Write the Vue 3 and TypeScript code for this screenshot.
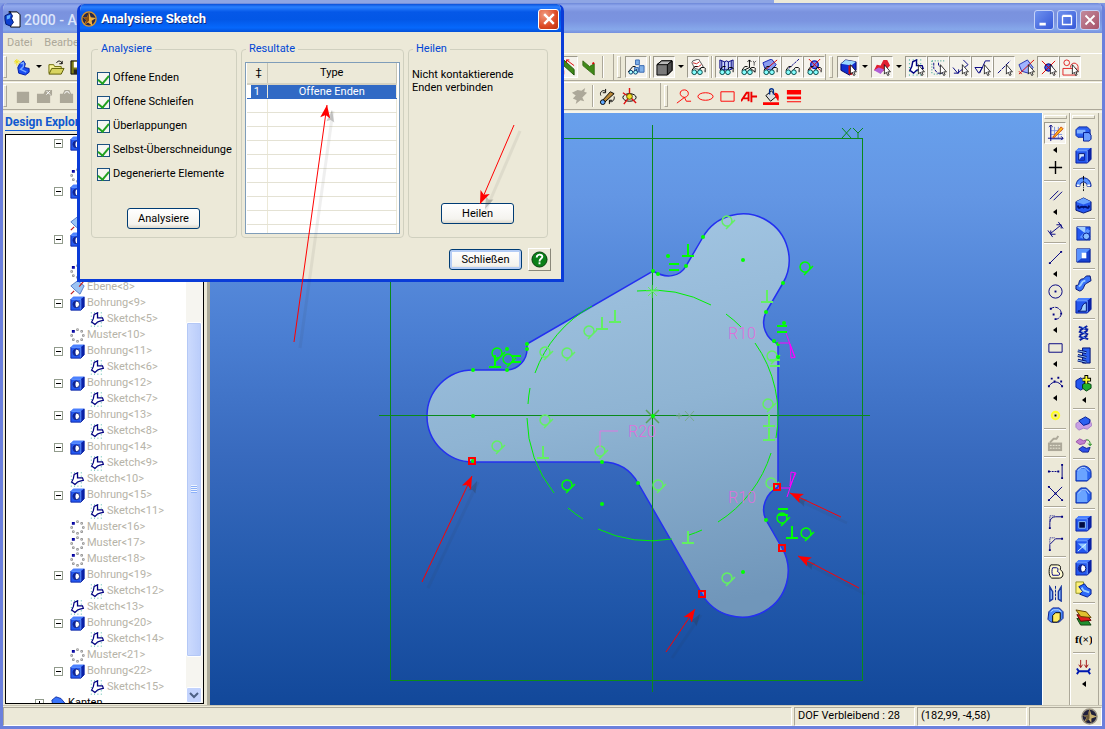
<script setup lang="ts">
import { ref } from 'vue'

type Item = { kind: 'btn' | 'drop' | 'sep' | 'gap'; icon?: string; label?: string; on?: boolean }
const b = (icon: string, label: string, on = false): Item => ({ kind: 'btn', icon, label, on })
const drop: Item = { kind: 'drop', label: 'Mehr' }
const sep: Item = { kind: 'sep' }
const gap: Item = { kind: 'gap' }

/* ---- icon parts, all on an 18 x 18 grid ---- */
const cursor = '<path d="M11 6v10l2-2 1.500 3.500 1.500-.8-1.400-3.100h2.800z" fill="#fff" stroke="#000" stroke-width=".8"/>'
const glasses =
  '<path d="M2 12l3-4h3M9 13l3-4h3l2 2" fill="none" stroke="#000"/><circle cx="4.500" cy="14" r="2.500" fill="#8ff" stroke="#044"/><circle cx="10.500" cy="14" r="2.500" fill="#8ff" stroke="#044"/><path d="M16 11v3" stroke="#000"/>'
const sketchShape =
  '<path d="M1 1h16M1 5h16M1 9h16M1 13h16M1 17h16" stroke="#0a9a88" stroke-dasharray="1 3" fill="none"/><path d="M6 15l-4-3 2-4 1-5 4-2 0 6 6 0 1 3-4 1-3 1z" fill="#fff" stroke="#000080" stroke-width="1.500"/>'
const block =
  '<path d="M1 4l3-3h13v12l-4 4H1z" fill="#2458f0"/><path d="M1 4l3-3h13l-4 3z" fill="#4a80ff"/><path d="M13 4l4-3v12l-4 4z" fill="#0a22a8"/><path d="M1 4h12v13" fill="none" stroke="#6fa0ff"/><path d="M1 4v13h12l4-4V1" fill="none" stroke="#0a1f9e"/>'
const ends = (x1: number, y1: number, x2: number, y2: number): string =>
  `<path d="M${x1 - 1} ${y1 - 1}h2v2h-2zM${x2 - 1} ${y2 - 1}h2v2h-2z" fill="#000080"/>`
const navy = 'fill="none" stroke="#000080"'

const icons: Record<string, string> = {
  app: '<path d="M5 1h9l3 3v13H7V1z" fill="#fff" stroke="#000"/><path d="M1 5l6-3 2 3-1 3 2 4-3 4-5-2-1-5z" fill="#0c3fd0" stroke="#001a70"/><path d="M3 5l4-1-1 4-3 1z" fill="#5fb0ff"/>',
  star: '<circle cx="9" cy="9" r="8" fill="#2a2a48" stroke="#d8962a" stroke-width="1.500"/><path d="M9 1l2 6 6 1-5 3 1 6-5-4-5 3 3-6-4-3 5 0z" fill="#f0b040"/><path d="M9 1v10l-5 5 2-6-4-3h5z" fill="#8a5010"/>',
  stardim: '<circle cx="9" cy="9" r="8" fill="#20203c" stroke="#9a9484" stroke-width="1.500"/><path d="M9 1l2 6 6 2-6 2 0 5-3-4-5 3 3-5-4-2 5 0z" fill="#c8b070"/><path d="M9 1v10l-5 5 2-6-4-2h5z" fill="#6a5838"/>',
  newdoc: '<path d="M6 5l4-3 2 3-1 4 5 1v4l-4 3-7-2-1-6z" fill="#1a4cf0" stroke="#001aa0"/><path d="M7 5l3-1 0 4-3 3 6 3" stroke="#79a8ff" stroke-width="1.500" fill="none"/><path d="M3 0v7M0 3h7M1 1l4 4M5 1l-4 4" stroke="#f0e020"/>',
  open: '<path d="M1 15V6h5l1 2h7v2" fill="#f8f49a" stroke="#6a6a00"/><path d="M1 16l3-6h13l-3 6z" fill="#d8d460" stroke="#5a5a00"/><path d="M9 4c2-3 5-2 6 1M15 2v3h-3" fill="none" stroke="#000"/>',
  save: '<path d="M1 2h15v14H1z" fill="#7a7a18" stroke="#000"/><path d="M4 3h9v6H4z" fill="#fff"/><path d="M4 11h9v5H4z" fill="#222"/>',
  g1: '<path d="M3 4h13v12H3z" fill="#aca899"/>',
  g2: '<path d="M1 6h7l2-4h7v6h-2v8H1z" fill="#aca899"/><path d="M11 3l4 4m0-4l-4 4" stroke="#fff"/>',
  g3: '<path d="M2 6h3l2-4h5l2 4h2v10H2z" fill="#aca899"/><path d="M7 6l1-2h3l1 2" fill="none" stroke="#fff"/>',
  greenbar: '<path d="M5 1l11 10v6L5 7z" fill="#3f8a18" stroke="#1a5008"/><path d="M0 10l5 6m0-4v4H1M8 1l8 6m-5-6H8v3" stroke="#d00" fill="none"/>',
  flag: '<path d="M2 2l7 6 5-3v12L2 7z" fill="#3f8a18" stroke="#3a6a18"/><path d="M12 5l2-1" stroke="#d00" stroke-width="2"/>',
  viewparts: '<path d="M8 1h4v5H8zM12 7h5v7h-5zM7 9h4v5H7z" fill="#7fb0e8" stroke="#3868b0"/><path d="M0 14l5-6h3M6 14l3-3" fill="none" stroke="#000"/><circle cx="3" cy="14" r="2" fill="#aff" stroke="#036"/><circle cx="8" cy="14" r="2" fill="#aff" stroke="#036"/>',
  cube: '<path d="M1 6l5-4h11v10l-5 5H1z" fill="#7a7a7a" stroke="#000"/><path d="M1 6l5-4h11l-5 4z" fill="#b8b8b8" stroke="#000"/><path d="M12 6l5-4v10l-5 5z" fill="#4a4a4a" stroke="#000"/>',
  barrel: '<path d="M3 2l6-2 5 8-5 3-4-1-3-6z" fill="#fff" stroke="#555"/><path d="M3 4l4 1 3-2M5 8l4 0 3-2" stroke="#c22" fill="none"/>' + glasses,
  vbook: '<path d="M2 1l5 2 2-1 2 1 5-2v9l-5 2-2-1-2 1-5-2zM7 3v9M11 3v9M4 2v9M14 2v9" fill="#c8d4f8" stroke="#000080"/>' + glasses,
  vaxis: '<path d="M10 9V1M8 3l2-2 2 2M10 9l6 5M10 9l-6 3" stroke="#000" fill="none"/><path d="M14 2l1 2 2-2m-2 2v3" stroke="#555" fill="none"/>' + glasses,
  vplane: '<path d="M1 4l9-4 5 6-5 6-7-2z" fill="#8a9cf0" stroke="#1420b0"/><path d="M4 11L16 1" stroke="#d00"/>' + glasses,
  vline: '<path d="M5 10L16 0" stroke="#000080" stroke-dasharray="3 1"/>' + glasses,
  vpoint: '<circle cx="9" cy="6" r="4" fill="#7080f0" stroke="#0018c0" stroke-width="1.500"/><path d="M3 0l12 12M15 0L3 12" stroke="#d00"/>' + glasses,
  selface: '<path d="M1 5l5-4 11 2v9l-7 5-9-5z" fill="#1030d0" stroke="#000060"/><path d="M1 5l5-4 11 2-5 4z" fill="#9ad8ff"/><path d="M9 7l4 0v10l-4-1z" fill="#e01010"/>' + cursor,
  selred: '<path d="M0 12l3-6 4 1 3-6 4 0 3 6-4 4-6 3z" fill="#e02030"/><path d="M0 12l5-3 6 2-4 5z" fill="#b060d8"/>' + cursor,
  selsk: sketchShape + cursor,
  selsk2: '<path d="M2 2h13M2 2v13M4 16h8" stroke="#0a8a7a" stroke-dasharray="1 2"/><path d="M4 4v6l4 5h5V9L9 7V3" fill="none" stroke="#000080" stroke-dasharray="3 1"/>' + cursor,
  seldim: `<path d="M12 1l5 5L6 15l-5-6M2 15h5v-4" ${navy}/>` + cursor,
  selsurf: `<path d="M1 9h8l-4 6zM6 15l6-13h5" ${navy}/>` + cursor,
  selline: `<path d="M2 15L15 2" ${navy} stroke-dasharray="5 1"/>` + cursor,
  selplane: '<path d="M1 6l9-5 6 8-5 6-7-2z" fill="#a0b4ff" stroke="#2030b0"/><path d="M1 16L17 1M1 13l3 3" stroke="#d00"/>' + cursor,
  selpoint: '<circle cx="9" cy="9" r="4" fill="#3858e0" stroke="#000080"/><path d="M2 2l14 14M16 2L2 16" stroke="#d00"/>' + cursor,
  selshape: '<circle cx="5" cy="4" r="3" fill="none" stroke="#e02020"/><path d="M1 10h14v7H1zM9 9c0-6 7-6 8-1v5" fill="none" stroke="#e02020"/>' + cursor,
  gplane: '<path d="M1 5l6-3 4 1 4-3-1 4 3 1-5 5 2 4-4-1-5 4 1-4-4-2 3-3z" fill="#aca899"/>',
  rotate: '<path d="M2 15L12 4l4 2-11 10z" fill="#b88838" stroke="#000"/><circle cx="4" cy="15" r="2.500" fill="#60a8ff" stroke="#000"/><path d="M2 8c-2-4 3-7 5-4M16 9c1 3-2 7-5 5M7 1v4H4M11 17v-4h3" fill="none" stroke="#000"/>',
  orient: '<ellipse cx="9" cy="10" rx="7" ry="4" fill="none" stroke="#000"/><path d="M9 0v9l-6 8M9 9l7 7M2 5l6 4" stroke="#e01010" stroke-width="1.500" fill="none"/><circle cx="9" cy="9" r="3" fill="#f0e020" stroke="#554400"/>',
  rlasso: '<path d="M2 16l8-6c6-1 5-8 0-8-6 0-6 7 0 8l2 4h5" fill="none" stroke="red"/>',
  rellipse: '<ellipse cx="9" cy="9" rx="8" ry="4" fill="none" stroke="red"/>',
  rrect: '<path d="M2 4h14v10H2z" fill="none" stroke="red"/>',
  rtext: '<path d="M0 14L6 5h2v9M3 11h5M11 4v11M11 9h6" fill="none" stroke="#e00" stroke-width="2"/>',
  bucket: '<path d="M3 8l6-5 5 6-6 5z" fill="#ddd" stroke="#000"/><path d="M7 7V3c0-3 4-3 4 0v4" fill="none" stroke="#003090" stroke-width="1.500"/><path d="M12 5c6-1 5 7 4 9l-3-5z" fill="red"/><path d="M0 15h17v3H0z" fill="red"/>',
  rlines: '<path d="M2 2h15v5H2zM2 9h15v3H2zM2 14h15v1H2z" fill="red"/>',
  /* sketch column */
  sketch: '<path d="M4 2v13h13M4 6h12M4 10h12M8 2v12M12 2v12" stroke="#7a90e0" fill="none"/><path d="M4 0v17M1 14h16M2 2l2-2 2 2M15 12l2 2-2 2" stroke="#000080" fill="none"/><path d="M6 13L15 2l2 2-9 9z" fill="#ffc020" stroke="#d04000"/>',
  plus: '<path d="M9 2v14M2 9h14" stroke="#000" stroke-width="1.500"/>',
  parallel: `<path d="M3 13L12 4M7 14l9-9" ${navy}/>`,
  dimension: `<path d="M1 10l5 7M12 1l5 7M4 13L14 5M4 10v4h5M10 4h5v4" ${navy}/>`,
  line: `<path d="M3 15L15 3" ${navy}/>` + ends(3, 15, 15, 3),
  circle: `<circle cx="9" cy="9" r="7" ${navy}/><path d="M8 8h2v2H8z" fill="#000080"/>`,
  arc: `<path d="M4 4c5-4 12 0 11 6-1 4-4 5-6 5" ${navy} stroke-dasharray="4 1"/>` + ends(4, 4, 9, 15) + ends(7, 10, 15, 9),
  rect: `<path d="M2 5h14v9H2z" ${navy}/>`,
  spline: `<path d="M2 14c4-6 10-6 14 0" ${navy}/>` + ends(2, 14, 16, 14) + ends(5, 6, 12, 5) + ends(8, 9, 15, 9),
  point: '<circle cx="9" cy="9" r="4" fill="#f4e890" stroke="#ffff20" stroke-width="2"/><path d="M8 8h2v2H8z" fill="#000"/>',
  keyboard: '<path d="M1 8h15v9H1z" fill="#aca899"/><path d="M3 8l4-4h3l2-3" stroke="#aca899" fill="none" stroke-width="2"/><path d="M3 11h11M3 14h11" stroke="#ece9d8" stroke-dasharray="2 1"/>',
  extend: `<path d="M2 9h10" ${navy} stroke-dasharray="2 1"/><path d="M16 2v14" ${navy}/>` + ends(2, 9, 16, 2) + ends(12, 9, 16, 16),
  trim: `<path d="M2 2l14 14M2 16L16 2" ${navy}/>` + ends(2, 2, 16, 16) + ends(2, 16, 9, 9),
  fillet: `<path d="M3 16V10c0-4 3-6 6-6h7" ${navy}/><path d="M3 9V3h6" ${navy} stroke-dasharray="1 1"/>` + ends(3, 16, 16, 4),
  chamfer: `<path d="M3 16V10l6-6h7" ${navy}/><path d="M3 9V3h6" ${navy} stroke-dasharray="1 1"/>` + ends(3, 16, 16, 4),
  offset: '<path d="M4 2h7c3 0 4 2 3 5 4 2 4 9-1 9H5c-4-2-3-12-1-14z" fill="#fffbd0" stroke="#000"/><path d="M6 5h4c2 0 2 2 1 4 3 1 3 4 1 4H6c-1-2-1-6 0-8z" fill="none" stroke="#000080"/>',
  mirror: '<path d="M3 2l3 5v8l-3 2zM15 2l-3 5v8l3 2z" fill="#8fc0ff" stroke="#1838a0" stroke-width="1.500"/><path d="M9 1v16" stroke="#002090" stroke-dasharray="3 1"/>',
  project: '<path d="M2 5l4-4h7l4 4v7l-4 4H4l-3-3z" fill="#4a88f8" stroke="#001890"/><path d="M4 5l3-2h5l3 2" stroke="#bfe0ff" fill="none"/><path d="M6 9l3-3h5v7l-3 3H6z" fill="#ffec60" stroke="#000"/>',
  /* solid column */
  extrude: '<path d="M1 5l3-3h9l3 3v5l-3 3H3l-2-2z" fill="#2c60f0" stroke="#0a28a0"/><path d="M2 5h9v4H2z" fill="#7fb0ff"/><path d="M9 8h6l2 3v4l-2 2H9z" fill="#6a9cff" stroke="#001890"/>',
  cut: block + '<path d="M4 7h6v7H4z" fill="#cfe4ff" stroke="#001070"/><path d="M4 14l3-4h3v4z" fill="#1238d8"/>',
  revolve: '<path d="M1 12c0-12 16-12 16 0h-4c0-6-8-6-8 0z" fill="#5a94ff" stroke="#001890"/><path d="M9 1v16" stroke="#000" stroke-dasharray="4 1 1 1"/><path d="M2 11h3M13 11h3" stroke="#fff" stroke-width="2"/>',
  revcut: '<path d="M1 5l8-4 8 4v9l-8 3-8-3z" fill="#2458f0" stroke="#001070"/><path d="M1 5l8 3 8-3-8-4z" fill="#6aa4ff"/><path d="M3 9c1 6 3-1 6 2 3-3 5 4 6-2" fill="none" stroke="#001070" stroke-width="2"/>',
  loft: '<path d="M2 2h14v14H2z" fill="#2458f0" stroke="#0a28a0"/><path d="M2 2h9v7z" fill="#a4d0ff"/><path d="M5 13l8-9 3 2-6 9z" fill="#5a94ff"/><circle cx="12" cy="12" r="3.500" fill="#88bcff" stroke="#001890"/>',
  loftcut: '<path d="M2 2h14v14H2z" fill="#1842d0" stroke="#001890"/><path d="M2 2l5 5v5l-5 4zM2 2h14l-5 5H7z" fill="#5a94ff"/><path d="M7 6h5v6H7z" fill="#fff"/>',
  sweep: '<path d="M1 11c5 1 1-7 8-7l3-3h4l1 5-5 3c-3 1-2 7-7 8l-4-2z" fill="#3a74fa" stroke="#001070"/><path d="M4 12c4-1 1-5 7-6" stroke="#9fd0ff" fill="none" stroke-width="2"/>',
  sweepcut: block + '<path d="M3 15c6 0 2-7 9-9v9z" fill="#9fd0ff" stroke="#001070"/>',
  helix: '<path d="M4 2l10 3M4 7l10 3M4 12l10 3M13 1L5 6M13 6l-8 5M13 11l-8 5" stroke="#0a1fa0" stroke-width="2"/><path d="M7 2l4 2M7 7l4 2M7 12l4 2" stroke="#6fa8ff"/>',
  helixcut: '<path d="M8 1h8v16H8z" fill="#2c60f0" stroke="#001070"/><path d="M3 4l9 2M3 9l9 2M3 14l9 2" stroke="#001070" stroke-width="3"/><path d="M3 4l9 2M3 9l9 2M3 14l9 2" stroke="#8fc4ff"/>',
  addpart: '<path d="M1 6l5-3 5 3v7l-5 3-5-3z" fill="#2458f0" stroke="#001890"/><path d="M8 10l4-2 5 2v4l-5 3-4-3z" fill="#20b030" stroke="#004010"/><path d="M12 0v9M8 5h9" stroke="#000" stroke-width="4"/><path d="M12 1v8M8 5h8" stroke="#ff3" stroke-width="2"/>',
  boolean: '<path d="M1 9l5-3 4 2 6-2 2 5-5 4-4-1-5 2-3-3z" fill="#c8a0e4" stroke="#a880c8"/><path d="M4 6l7-4 5 3-1 4-6 2z" fill="#2c60f0" stroke="#001890"/>',
  transform: '<path d="M1 5l4-3 4 2 3-1-2 4-5 1z" fill="#c080d0" stroke="#9850a8"/><path d="M4 13l4-3 4 2 4-1-2 5-6 0z" fill="#2c50e8" stroke="#102090"/><path d="M12 3c4 0 4 3 4 6m-2-2l2 2 2-2" fill="none" stroke="#008000"/>',
  filletsolid: '<path d="M1 6c3-4 6-5 9-5 5 1 7 4 7 7v5l-4 4H1z" fill="#2a64ee" stroke="#0a28a0"/><path d="M2 8c1-4 4-4 9-4l2 4v8H2z" fill="#6aa4ff"/><path d="M3 6c2-3 5-4 8-3l4 4" fill="none" stroke="#d0e8ff"/>',
  chamfersolid: '<path d="M1 6l5-5h6l5 5v7l-4 4H1z" fill="#2a64ee" stroke="#0a28a0"/><path d="M2 8l4-4h5l2 4v8H2z" fill="#6aa4ff"/><path d="M3 7l4-4h5l3 4" fill="none" stroke="#d0e8ff"/>',
  shell: block + '<path d="M4 7h7v7H4z" fill="#000a40" stroke="#8fc4ff"/>',
  draft: block + '<path d="M3 7l9 8V7z" fill="#8fc4ff"/><path d="M3 15l9-8" stroke="#dff"/>',
  hole: block + '<circle cx="7.500" cy="10" r="4" fill="#fff" stroke="#00106a"/><path d="M8 6C2 6 2 14 8 14 6 12 6 8 8 6z" fill="#0a2098"/>',
  import: '<path d="M1 1h8v12H1z" fill="#fff27a" stroke="#909020"/><path d="M4 6l6-3 3 4 4 2v5l-4 3-8-3 3-3z" fill="#2c68f8" stroke="#001890"/><path d="M7 7l2 3 6 2" stroke="#9fd0ff" fill="none" stroke-width="2"/>',
  layers: '<path d="M2 10l11 1 4 6-11 0z" fill="#209030" stroke="#104010"/><path d="M2 6l11 1 4 5-11 1z" fill="#e02020" stroke="#600"/><path d="M1 1l11 2 5 6-11-1z" fill="#e0c030" stroke="#604000"/>',
  fx: '<text x="0" y="13" font-family="Liberation Serif, serif" font-weight="bold" font-size="12" fill="#000">f(×)</text>',
  press: '<path d="M6 1v8M12 1v8M4 6l2 3 2-3M10 6l2 3 2-3" stroke="#a01010" fill="none"/><path d="M2 10l2 3-2 3M16 10l-2 3 2 3M3 13h12" stroke="#0018b0" stroke-width="2" fill="none"/>',
  /* tree */
  plane: '<path d="M1 7l8-6 8 6-5 10-6-5z" fill="#9cc4f4" stroke="#4870c0"/><path d="M1 17l4-4M11 8l5-6" stroke="#c02020" stroke-width="1.500"/>',
  pattern: '<path d="M8 1h2v2H8zM13 3h2v2h-2zM15 8h2v2h-2zM13 13h2v2h-2zM8 15h2v2H8zM3 13h2v2H3zM1 8h2v2H1z" fill="#fff" stroke="#888"/><path d="M3 3h2v2H3z" fill="#fff" stroke="#0000a0" stroke-width="1.500"/>',
  sk: sketchShape,
  edges: '<path d="M1 5l5-4 6 2 5 6v7H3z" fill="#3a74fa" stroke="#0a28a0"/><path d="M8 9h8v7H8z" fill="#2458f0" stroke="#e01010"/>',
}

const bar1Left: Item[] = [b('newdoc', 'Neu'), drop, b('open', 'Öffnen'), b('save', 'Speichern'), gap, b('greenbar', 'Messen', true), b('flag', 'Fläche'), sep]
const bar1Mid: Item[] = [b('viewparts', 'Teile', true), sep, b('cube', 'Schattiert', true), drop, b('barrel', 'Zylinder', true), sep, b('vbook', 'Schnitt', true), b('vaxis', 'Achsen', true), b('vplane', 'Ebenen', true), b('vline', 'Linien', true), b('vpoint', 'Punkte', true)]
const bar1Right: Item[] = [b('selface', 'Flächen wählen', true), drop, b('selred', 'Körper wählen', true), drop, b('selsk', 'Skizze wählen', true), b('selsk2', 'Kontur wählen', true), b('seldim', 'Maß wählen', true), b('selsurf', 'Symbol wählen', true), b('selline', 'Linie wählen', true), b('selplane', 'Ebene wählen'), b('selpoint', 'Punkt wählen', true), b('selshape', 'Form wählen', true)]
const bar2Left: Item[] = [b('g1', 'Fenster'), b('g2', 'Einfügen'), b('g3', 'Sperren'), gap, b('gplane', 'Ebene'), sep, b('rotate', 'Drehen'), b('orient', 'Ausrichten')]
const bar2Right: Item[] = [b('rlasso', 'Hinweis'), b('rellipse', 'Ellipse'), b('rrect', 'Rechteck'), b('rtext', 'Text'), b('bucket', 'Füllen'), b('rlines', 'Linienstärke')]
const colSketch: Item[] = [b('sketch', 'Skizze', true), drop, b('plus', 'Achse'), sep, b('parallel', 'Parallel'), drop, b('dimension', 'Bemaßung'), sep, b('line', 'Linie'), drop, b('circle', 'Kreis'), b('arc', 'Bogen'), drop, b('rect', 'Rechteck'), drop, b('spline', 'Spline'), drop, b('point', 'Punkt'), sep, b('keyboard', 'Eingabe'), sep, b('extend', 'Verlängern'), b('trim', 'Trimmen'), sep, b('fillet', 'Rundung'), b('chamfer', 'Fase'), sep, b('offset', 'Versatz'), b('mirror', 'Spiegeln'), b('project', 'Projizieren')]
const colSolid: Item[] = [b('extrude', 'Extrusion'), b('cut', 'Ausschnitt'), sep, b('revolve', 'Rotation'), b('revcut', 'Rotationsschnitt'), sep, b('loft', 'Loft'), b('loftcut', 'Loftschnitt'), sep, b('sweep', 'Sweep'), b('sweepcut', 'Sweepschnitt'), sep, b('helix', 'Helix'), b('helixcut', 'Helixschnitt'), sep, b('addpart', 'Teil'), drop, sep, b('boolean', 'Boolesch'), b('transform', 'Transformieren'), sep, b('filletsolid', 'Kante runden'), b('chamfersolid', 'Kante fasen'), sep, b('shell', 'Schale'), b('draft', 'Schräge'), b('hole', 'Bohrung'), b('import', 'Import'), sep, b('layers', 'Ebenen'), b('fx', 'Formel'), sep, b('press', 'Pressen'), drop]
const toolRows = [[bar1Left, bar1Mid, bar1Right], [bar2Left, bar2Right]]

type Row = { icon: string; label: string; lvl: number; box?: string }
const hole = (n: number | string): Row => ({ icon: 'hole', label: n ? `Bohrung<${n}>` : '', lvl: 1, box: '−' })
const sub = (n: number): Row => ({ icon: 'sk', label: `Sketch<${n}>`, lvl: 2 })
const pat = (n: number | string): Row => ({ icon: 'pattern', label: n ? `Muster<${n}>` : '', lvl: 1 })
const none: Row = { icon: 'sk', label: '', lvl: 2 }
const tree: Row[] = [
  hole(''), none, pat(''), hole(''), none, { icon: 'plane', label: '', lvl: 1 }, hole(''), none, pat(''),
  { icon: 'plane', label: 'Ebene<8>', lvl: 1 }, hole(9), sub(5), pat(10), hole(11), sub(6), hole(12), sub(7), hole(13), sub(8), hole(14), sub(9),
  { icon: 'sk', label: 'Sketch<10>', lvl: 1 }, hole(15), sub(11), pat(16), pat(17), pat(18), hole(19), sub(12),
  { icon: 'sk', label: 'Sketch<13>', lvl: 1 }, hole(20), sub(14), pat(21), hole(22), sub(15), { icon: 'edges', label: 'Kanten', lvl: 0, box: '+' },
]

const checks = ref([
  { label: 'Offene Enden', on: true },
  { label: 'Offene Schleifen', on: true },
  { label: 'Überlappungen', on: true },
  { label: 'Selbst-Überschneidungen', on: true },
  { label: 'Degenerierte Elemente', on: true },
])
const emptyRows = 10
const dialogOpen = ref(true)

/* ---- sketch geometry ---- */
const outline =
  'M473 370A46 46 0 0 0 473 462H602Q626 462 638 483L702 594A46 46 0 1 0 782 548L766 520C760 508 766 493 778 487V344C766 339 760 325 766 312L783 283A46 46 0 1 0 703 237L686 266C680 277 666 279 653 271L527 344V349A21 21 0 0 1 507 370Z'
const dashes = [
  [637, 291, 711, 305], [726, 314, 741, 327], [755, 343, 776, 438], [771, 453, 718, 522], [702, 530, 689, 535],
  [672, 539, 598, 529], [583, 519, 568, 508], [554, 493, 527, 418], [528, 404, 530, 388], [535, 373, 592, 306],
].map(([x1, y1, x2, y2]) => `M${x1} ${y1}A125 125 0 0 1 ${x2} ${y2}`).join('')
const dots = [[743, 260], [703, 237], [686, 266], [658, 274], [653, 271], [668, 256], [783, 283], [766, 312], [784, 323], [774, 341], [778, 344], [778, 357], [473, 370], [507, 370], [527, 344], [527, 349], [507, 349], [473, 416], [473, 461], [602, 462], [602, 504], [638, 483], [743, 572], [766, 520], [653, 416]]
const tangents = [[727, 221, 0], [805, 267, 1], [772, 356, 0], [768, 404, 0], [497, 353, 1], [508, 359, 1], [545, 352, 0], [567, 353, 0], [589, 331, 0], [545, 420, 0], [497, 446, 0], [600, 451, 0], [567, 485, 1], [658, 485, 0], [771, 483, 0], [782, 518, 1], [806, 533, 1], [727, 578, 0]]
const perps = [[688, 256, 1], [767, 302, 0], [769, 426, 0], [769, 440, 0], [495, 367, 1], [602, 329, 0], [615, 322, 0], [543, 458, 0], [688, 543, 0], [792, 538, 1]]
const equals = [[674, 267, 1], [782, 329, 1], [775, 363, 0], [516, 359, 1], [783, 512, 1]]
const openEnds = [[472, 461], [777, 487], [782, 548], [702, 594]]
const arrows = [[294, 342, 327, 105], [514, 125, 480, 204], [422, 582, 472, 476], [666, 652, 695, 609], [841, 517, 790, 493], [859, 588, 798, 556]]
const tint = (on: number): string => (on ? '#00ff00' : '#62f062')
const head = ([x1, y1, x2, y2]: number[]): string => {
  const a = (Math.atan2(y2 - y1, x2 - x1) * 180) / Math.PI
  return `translate(${x2} ${y2}) rotate(${a})`
}
</script>

<template>
  <div class="desktop">
    <div class="backdrop"><span></span></div>
    <main class="window">
      <header class="titlebar">
        <svg class="ico" viewBox="0 0 18 18" v-html="icons.app"></svg>
        <h1>2000 - A</h1>
        <button class="wb" aria-label="Minimieren"><svg viewBox="0 0 20 20"><path d="M5 13h7v3H5z" fill="#fff" /></svg></button>
        <button class="wb" aria-label="Maximieren"><svg viewBox="0 0 20 20"><path d="M5 6h10v9H5zM5 5h10" fill="none" stroke="#fff" stroke-width="1.500" /></svg></button>
        <button class="wb shut" aria-label="Beenden"><svg viewBox="0 0 20 20"><path d="M5 5l10 10M15 5L5 15" stroke="#fff" stroke-width="2" /></svg></button>
      </header>
      <nav class="menu"><button>Datei</button><button>Bearbeiten</button></nav>

      <div v-for="(row, r) in toolRows" :key="r" class="toolrow">
        <div v-for="(group, g) in row" :key="g" class="group" :class="'g' + r + g">
          <i class="grip"></i>
          <template v-for="(it, i) in group" :key="i">
            <button v-if="it.kind === 'btn'" class="tool" :class="{ on: it.on }" :aria-label="it.label"><svg viewBox="0 0 18 18" v-html="icons[it.icon!]"></svg></button>
            <button v-else-if="it.kind === 'drop'" class="drop" :aria-label="it.label"><svg viewBox="0 0 6 4"><path d="M0 0h6L3 3z" /></svg></button>
            <i v-else :class="it.kind"></i>
          </template>
        </div>
      </div>

      <div class="work">
        <aside class="explorer">
          <h2>Design Explorer</h2>
          <div class="treebox">
            <ul>
              <li v-for="(n, i) in tree" :key="i" :class="'l' + n.lvl">
                <button v-if="n.box" class="toggle" :aria-label="n.box === '+' ? 'Aufklappen' : 'Zuklappen'">
                  <svg viewBox="0 0 7 7"><path d="M1 3h5v1H1z" /><path v-if="n.box === '+'" d="M3 1h1v5H3z" /></svg>
                </button>
                <i v-else class="toggle-space"></i>
                <svg class="node" viewBox="0 0 18 18" v-html="icons[n.icon]"></svg>
                <span>{{ n.label }}</span>
              </li>
            </ul>
            <div class="scroll">
              <i class="thumb"><b></b></i>
              <button aria-label="Nach unten"><svg viewBox="0 0 10 10"><path d="M1 3l4 4 4-4" fill="none" stroke="#4d6185" stroke-width="2" /></svg></button>
            </div>
          </div>
        </aside>

        <svg class="canvas" viewBox="210 113 832 592" preserveAspectRatio="xMidYMid slice">
          <defs>
            <linearGradient id="body" gradientUnits="userSpaceOnUse" x1="560" y1="214" x2="640" y2="618">
              <stop offset="0" stop-color="#a3c6e3" /><stop offset="0.5" stop-color="#8fb4d3" /><stop offset="1" stop-color="#7096ba" />
            </linearGradient>
          </defs>
          <path :d="outline" fill="url(#body)" stroke="#2430f0" stroke-width="1.500" />
          <g fill="none" stroke="#0a8a1a" shape-rendering="crispEdges">
            <path d="M390.500 138.500H862.500V680.500H390.500Z" stroke-width="1.500" />
            <path d="M652.500 125V692M379 415.500H870" />
          </g>
          <path d="M842 128l9 10M851 128l-9 10M853 128l5 5 5-5M858 133v5" fill="none" stroke="#0a8a1a" />
          <path d="M646 410l13 13M659 410l-13 13" fill="none" stroke="#5aa05a" stroke-width="1.500" />
          <path d="M676 416h6M679 413v6M685 411l9 10M694 411l-9 10" fill="none" stroke="#78a890" />
          <path :d="dashes" fill="none" stroke="#00f000" />
          <path d="M646 291h13M652 285v13M648 287l9 9M657 287l-9 9" stroke="#62f062" />
          <g fill="none" stroke-width="1.500">
            <path v-for="(t, i) in tangents" :key="'t' + i" :transform="`translate(${t[0]} ${t[1]})`" :stroke="tint(t[2])" d="M5 0A5 5 0 1 0 5 .1M-1 8L8 -1" />
            <path v-for="(t, i) in perps" :key="'p' + i" :transform="`translate(${t[0]} ${t[1]})`" :stroke="tint(t[2])" d="M-6 0H6M0 0V-12" stroke-width="2" />
            <path v-for="(t, i) in equals" :key="'e' + i" :transform="`translate(${t[0]} ${t[1]})`" :stroke="tint(t[2])" d="M-5 -3H5M-5 3H5" stroke-width="2" />
          </g>
          <circle v-for="(d, i) in dots" :key="'d' + i" :cx="d[0]" :cy="d[1]" r="2" fill="#00ff00" />
          <g class="radius"><text x="728" y="339">R10</text><text x="628" y="437">R20</text><text x="728" y="503">R10</text></g>
          <path d="M600 448V431H618" fill="none" stroke="#dd78e0" />
          <path d="M778 343H790M786 333L795 358M790 344l1 14 4-1-5-13M778 488H790M787 497L795 473M790 486l1-14 5 1-6 13" fill="none" stroke="#f0f" />
          <path v-for="(o, i) in openEnds" :key="'o' + i" :transform="`translate(${o[0]} ${o[1]})`" d="M-3 -3H3V3H-3Z" fill="none" stroke="#f00" stroke-width="2" />
        </svg>

        <div class="column"><i class="hgrip"></i>
          <template v-for="(it, i) in colSketch" :key="i">
            <button v-if="it.kind === 'btn'" class="tool" :class="{ on: it.on }" :aria-label="it.label"><svg viewBox="0 0 18 18" v-html="icons[it.icon!]"></svg></button>
            <button v-else-if="it.kind === 'drop'" class="side" :aria-label="it.label"><svg viewBox="0 0 4 6"><path d="M4 0v6L0 3z" /></svg></button>
            <i v-else class="hsep"></i>
          </template>
        </div>
        <div class="column last"><i class="hgrip"></i>
          <template v-for="(it, i) in colSolid" :key="i">
            <button v-if="it.kind === 'btn'" class="tool" :aria-label="it.label"><svg viewBox="0 0 18 18" v-html="icons[it.icon!]"></svg></button>
            <button v-else-if="it.kind === 'drop'" class="side" :aria-label="it.label"><svg viewBox="0 0 4 6"><path d="M4 0v6L0 3z" /></svg></button>
            <i v-else class="hsep"></i>
          </template>
        </div>
      </div>

      <footer class="status">
        <span class="fill"></span><span class="dof">DOF Verbleibend : 28</span><span class="pos">(182,99, -4,58)</span>
        <span class="end"><svg viewBox="0 0 18 18" v-html="icons.stardim"></svg></span>
      </footer>
    </main>

    <section v-if="dialogOpen" class="dialog" role="dialog" aria-labelledby="dlg">
      <header>
        <svg viewBox="0 0 18 18" v-html="icons.star"></svg>
        <h2 id="dlg">Analysiere Sketch</h2>
        <button class="x" aria-label="Dialog schließen" @click="dialogOpen = false"><svg viewBox="0 0 20 20"><path d="M4 4l12 12M16 4L4 16" stroke="#fff" stroke-width="3" /></svg></button>
      </header>
      <div class="panel">
        <div class="sets">
          <fieldset class="opts">
            <legend>Analysiere</legend>
            <label v-for="c in checks" :key="c.label"><input v-model="c.on" type="checkbox" /><span>{{ c.label }}</span></label>
            <button class="xp">Analysiere</button>
          </fieldset>
          <fieldset class="results">
            <legend>Resultate</legend>
            <div class="list">
              <table>
                <thead><tr><th>‡</th><th>Type</th></tr></thead>
                <tbody>
                  <tr class="sel"><td>1</td><td>Offene Enden</td></tr>
                  <tr v-for="n in emptyRows" :key="n"><td></td><td></td></tr>
                </tbody>
              </table>
            </div>
          </fieldset>
          <fieldset class="heal">
            <legend>Heilen</legend>
            <p>Nicht kontaktierende Enden verbinden</p>
            <button class="xp">Heilen</button>
          </fieldset>
        </div>
        <div class="actions">
          <button class="xp main" @click="dialogOpen = false">Schließen</button>
          <button class="help" aria-label="Hilfe"><svg viewBox="0 0 18 18"><circle cx="9" cy="9" r="8" fill="#0a8018" stroke="#033a08" /><path d="M6 7c0-4 6-4 6-1 0 2-3 2-3 5M9 12v2" fill="none" stroke="#fff" stroke-width="2" /></svg></button>
        </div>
      </div>
    </section>

    <svg class="arrows" viewBox="0 0 1105 729" preserveAspectRatio="xMinYMin slice">
      <g v-for="(a, i) in arrows" :key="i">
        <g transform="translate(6 6)" opacity="0.07" stroke="#333" stroke-width="3"><path :d="`M${a[0]} ${a[1]}L${a[2]} ${a[3]}`" /></g>
        <path :transform="'translate(5 5) ' + head(a)" d="M0 0L-12 -4L-10 0L-12 4Z" fill="#333" opacity="0.25" />
        <path :d="`M${a[0]} ${a[1]}L${a[2]} ${a[3]}`" stroke="#f00" />
        <path :transform="head(a)" d="M0 0L-13 -5L-10 0L-13 5Z" fill="#f00" />
      </g>
    </svg>
  </div>
</template>

<style>
html, body { margin: 0; overflow: hidden; }
</style>

<style scoped>
.desktop { position: relative; display: flex; flex-direction: column; height: 100vh; overflow: hidden; background: #7f98e2; font: 11px/14px Roboto, "Liberation Sans", sans-serif; color: #000; }
.desktop * { box-sizing: border-box; }
button { font: inherit; color: inherit; border: 0; padding: 0; background: none; display: flex; align-items: center; justify-content: center; flex: none; }
svg { display: block; flex: none; }
h1, h2, p, ul { margin: 0; padding: 0; }
.backdrop { flex: none; height: 3px; background: #ece9d8; }
.backdrop span { display: block; width: 70%; height: 3px; background: #8ea5e4; }
.window { flex: 1; min-height: 0; display: flex; flex-direction: column; border: solid #6b80dc; border-width: 0 3px 3px; border-radius: 7px 7px 0 0; background: #ece9d8; overflow: hidden; }

.titlebar { flex: none; height: 30px; display: flex; align-items: center; gap: 3px; padding: 3px 2px 0 1px; background: linear-gradient(#6d87d8, #92aaee 3px, #7a92de 9px, #7b94e0 60%, #86a8ea 88%, #7690de); }
.ico { width: 17px; height: 17px; }
.titlebar h1 { flex: 1; font-size: 14px; font-weight: 500; line-height: 18px; color: #dbe5fb; }
.wb { width: 20px; height: 20px; border: 1px solid #c3d2f8; border-radius: 3px; background: linear-gradient(135deg, #6f92ee, #3558d8); }
.wb svg { width: 18px; height: 18px; }
.wb.shut { background: linear-gradient(135deg, #c28a9c, #a8536a); }

.menu { flex: none; height: 20px; display: flex; gap: 12px; padding-left: 4px; color: #aca899; }
.toolrow { flex: none; height: 29px; display: flex; border-top: 1px solid #fff; }
.toolrow + .toolrow { height: 31px; border-bottom: 2px solid #f6f4ea; }
.group { flex: none; height: 27px; display: flex; align-items: center; border-right: 1px solid #aca899; border-bottom: 1px solid #aca899; }
.g00 { width: 611px; }
.g01 { width: 212px; }
.g02 { flex: 1; border-right: 0; }
.g10 { width: 658px; }
.g10 .grip ~ .tool:last-of-type { margin-right: 20px; }
.g11 { flex: 1; border-right: 0; }
.grip { flex: none; width: 4px; height: 22px; margin: 0 4px 0 0; border: 1px solid #aca899; border-color: #fff #aca899 #aca899 #fff; }
.group + .group .grip { margin: 0 4px 0 3px; }
.gap { flex: 1; }
.sep { flex: none; width: 2px; height: 22px; margin: 0 2px; border-left: 1px solid #aca899; border-right: 1px solid #fff; }
.g00 .sep { margin-right: 9px; }
.tool { width: 22px; height: 22px; }
.tool svg { width: 17px; height: 17px; }
.tool.on { border: 1px solid #aca899; border-color: #9d9a8c #fff #fff #9d9a8c; background: #f5f3ec; }
.drop { width: 12px; height: 22px; }
.drop svg { width: 6px; height: 4px; }

.work { flex: 1; min-height: 0; display: flex; }
.explorer { flex: none; width: 207px; display: flex; flex-direction: column; padding: 1px 3px 1px 2px; border-right: 3px solid #aaa898; }
.explorer h2 { flex: none; height: 17px; margin-bottom: 3px; border-bottom: 1px solid #1060d8; font-size: 12px; line-height: 16px; font-weight: 700; color: #1058d0; white-space: nowrap; overflow: hidden; }
.treebox { flex: 1; min-height: 0; display: flex; border: 1px solid #000; background: #fff; overflow: hidden; }
.treebox ul { flex: 1; list-style: none; overflow: hidden; color: #b6b3a8; }
li { height: 16px; display: flex; align-items: center; white-space: nowrap; line-height: 16px; }
.l0 { padding-left: 29px; color: #000; }
.l1 { padding-left: 48px; }
.l2 { padding-left: 68px; }
.toggle, .toggle-space { flex: none; width: 9px; height: 9px; }
.toggle { border: 1px solid #919b8c; background: #fff; }
.toggle svg { width: 7px; height: 7px; }
.node { width: 15px; height: 15px; margin: 0 2px 0 7px; }
.scroll { flex: none; width: 17px; display: flex; flex-direction: column; align-items: stretch; padding-right: 1px; background: #f6f5f0; }
.thumb { height: 59%; margin-top: auto; border: 1px solid #fff; border-radius: 2px; background: linear-gradient(90deg, #cddbfd, #b9ccfa); box-shadow: inset 0 0 0 1px #b4c8f6; display: flex; align-items: center; justify-content: center; }
.thumb b { width: 6px; height: 8px; background: repeating-linear-gradient(#eef4fe 0 1px, #8cb0f8 1px 2px); }
.scroll button { height: 16px; margin-top: 30px; border: 1px solid #fff; border-radius: 2px; background: #c3d3fd; }
.scroll button svg { width: 10px; height: 10px; }
.canvas { flex: 1; min-width: 0; width: 100%; height: 100%; background: linear-gradient(#68a0ec, #6396e4 14%, #4a7ed2 38%, #386abe 58%, #2259ac 80%, #12489a); }
.radius { font: 300 16px Roboto, "Liberation Sans", sans-serif; fill: #dd6fdc; }
.column { flex: none; width: 28px; padding: 0 2px 1px 0; display: flex; flex-direction: column; align-items: center; border-right: 1px solid #aca899; border-left: 1px solid #fff; }
.last { width: 29px; margin-right: 3px; }
.hgrip { flex: none; width: 23px; height: 4px; margin: 2px 0 3px; border: 1px solid #aca899; border-color: #fff #aca899 #aca899 #fff; }
.hsep { flex: none; width: 22px; height: 2px; margin: 2px 0; border-top: 1px solid #aca899; border-bottom: 1px solid #fff; }
.side { width: 22px; height: 12px; }
.side svg { width: 4px; height: 6px; }
.status { flex: none; height: 21px; display: flex; gap: 2px; padding-top: 1px; border-top: 1px solid #c8c5b4; line-height: 16px; }
.status span { border: 1px solid #aca899; border-color: #aca899 #fff #fff #aca899; padding-left: 3px; white-space: nowrap; }
.fill { flex: 1; }
.dof { width: 121px; }
.pos { width: 110px; }
.end { width: 73px; display: flex; justify-content: flex-end; padding-right: 3px; }
.end svg { width: 17px; height: 17px; }

.dialog { position: absolute; left: 77px; top: 4px; width: 487px; border: 3px solid #0a3cd8; border-top: 0; border-radius: 7px 7px 0 0; background: #ece9d8; overflow: hidden; }
.dialog header { height: 28px; display: flex; align-items: center; gap: 4px; padding: 2px 2px 0 1px; background: linear-gradient(#0a50d8, #2a80ff 3px, #0558e8 8px, #0357e6 55%, #0668fc 85%, #0450d8); }
.dialog header svg { width: 16px; height: 16px; }
.dialog h2 { flex: 1; font-size: 13px; line-height: 18px; font-weight: 700; color: #fff; text-shadow: 1px 1px #0a2a80; }
.dialog .x { width: 21px; height: 21px; border: 1px solid #fff; border-radius: 3px; background: radial-gradient(circle at 30% 25%, #f09a80, #dd4a24 60%, #b83010); }
.panel { padding: 10px 10px 8px 11px; }
.sets { display: grid; grid-template-columns: minmax(0, 146fr) minmax(0, 163fr) minmax(0, 140fr); gap: 4px; height: 196px; padding-right: 3px; }
fieldset { margin: 0; min-width: 0; border: 1px solid #d0d0bf; border-radius: 4px; padding: 0 4px; display: flex; flex-direction: column; }
legend { margin-left: 1px; padding: 0 3px; color: #0046d5; line-height: 14px; font-size: 11px; }
.opts { padding-left: 5px; }
.results { padding: 0 3px; }
.heal { padding: 0 3px; }
.opts label { height: 24px; display: flex; align-items: center; gap: 3px; white-space: nowrap; overflow: hidden; }
.opts legend + label { margin-top: 10px; }
.opts input { appearance: none; flex: none; width: 13px; height: 13px; margin: 0; border: 1px solid #1c5180; background: #f6f6f2; display: grid; justify-items: center; align-items: start; }
.opts input:checked::after { content: ""; width: 5px; height: 9px; border: solid #21a121; border-width: 0 2px 2px 0; rotate: 40deg; }
.xp { width: 73px; height: 21px; border: 1px solid #003c74; border-radius: 3px; background: linear-gradient(#fff, #f4f3ee 80%, #dcd8cc); }
.opts .xp { margin: 22px auto 0 30px; }
.list { height: 172px; margin-top: 6px; border: 1px solid #7f9db9; background: #fff; padding: 0 2px 0 1px; overflow: hidden; }
table { width: 100%; border-collapse: collapse; table-layout: fixed; }
th { height: 21px; padding: 0; font-weight: 400; background: #ece9d8; border-bottom: 2px solid #d5d2c2; border-right: 1px solid #c8c5b4; }
th:first-child { width: 20px; padding-left: 4px; }
td { height: 14px; padding: 0; line-height: 13px; border-bottom: 1px solid #e4e2d4; border-right: 1px solid #ece9d8; text-align: center; }
.sel td { background: #316ac5; color: #fff; border-bottom-color: #316ac5; }
.sel td:first-child { background: linear-gradient(90deg, #fff 4px, #316ac5 4px); }
.heal p { margin-top: 12px; width: 115px; line-height: 13px; }
.heal .xp { margin: auto auto 13px 29px; }
.actions { display: flex; align-items: center; gap: 6px; justify-content: flex-end; margin-top: 10px; }
.main { box-shadow: inset 0 0 0 2px #b5cdf5; }
.help { width: 23px; height: 23px; border: 1px solid #fff; border-color: #fff #8a887a #8a887a #fff; }
.help svg { width: 17px; height: 17px; }
.arrows { position: absolute; inset: 0; width: 100%; height: 100%; pointer-events: none; }
</style>
